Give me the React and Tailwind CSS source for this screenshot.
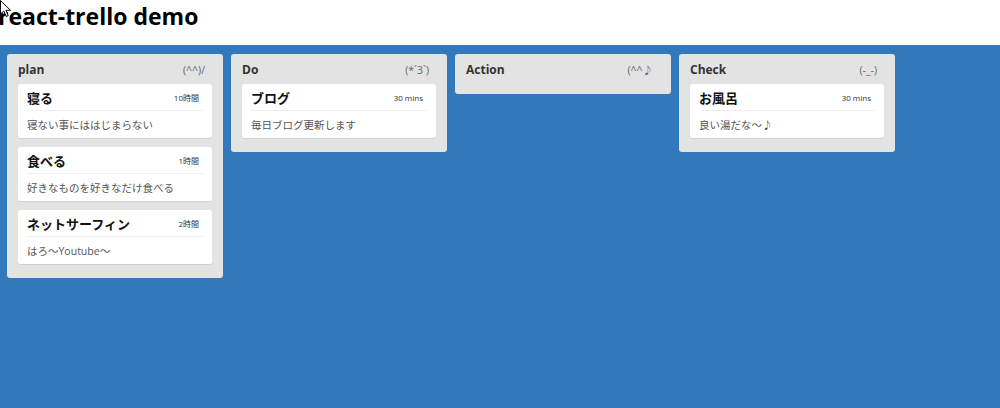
const lanes = [
  {
    title: "plan",
    label: "(^^)/",
    cards: [
      { title: "寝る", label: "10時間", description: "寝ない事にははじまらない" },
      { title: "食べる", label: "1時間", description: "好きなものを好きなだけ食べる" },
      { title: "ネットサーフィン", label: "2時間", description: "はろ～Youtube～" },
    ],
  },
  {
    title: "Do",
    label: "(*´3`)",
    cards: [{ title: "ブログ", label: "30 mins", description: "毎日ブログ更新します" }],
  },
  { title: "Action", label: "(^^♪", cards: [] },
  {
    title: "Check",
    label: "(-_-)",
    cards: [{ title: "お風呂", label: "30 mins", description: "良い湯だな～♪" }],
  },
];

function Card({ title, label, description }) {
  return (
    <article className="rounded-[3px] border-b border-[#cfcfcf] bg-white px-[9px] pt-[6px] pb-[4px]">
      <header className="flex items-center justify-between border-b border-[#eeeeee] pb-[4px]">
        <span className="text-[13px] font-bold leading-[16px] text-[#111]">{title}</span>
        <span className="pr-[4px] text-[8px] leading-[16px] text-[#333]">{label}</span>
      </header>
      <p className="pt-[5px] text-[10.5px] leading-[18px] text-[#555]">{description}</p>
    </article>
  );
}

function Lane({ title, label, cards }) {
  return (
    <section className="flex w-[216px] shrink-0 flex-col rounded-[3px] bg-[#e3e3e3] px-[11px] pb-[13px] pt-[8px]">
      <header className="flex items-center justify-between pb-[3px] pr-[7px]">
        <span className="text-[12px] font-bold leading-[16px] text-[#333]">{title}</span>
        <span className="text-[10.5px] leading-[16px] text-[#666]">{label}</span>
      </header>
      {cards.length > 0 && (
        <div className="mt-[3px] flex flex-col gap-[8px]">
          {cards.map((card) => (
            <Card key={card.title} {...card} />
          ))}
        </div>
      )}
    </section>
  );
}

export default function App() {
  return (
    <div className="relative h-[408px] w-[1000px] overflow-hidden bg-white font-['Open_Sans','Noto_Sans_CJK_JP',sans-serif]">
      <h1 className="-ml-[2px] h-[45px] pt-[1px] text-[23px] font-bold leading-[30px] text-black">react-trello demo</h1>
      <main className="flex h-[363px] items-start gap-[8px] bg-[#3179ba] px-[7px] pt-[9px]">
        {lanes.map((lane) => (
          <Lane key={lane.title} {...lane} />
        ))}
      </main>
      <svg className="absolute left-0 top-0" width="12" height="18" viewBox="0 0 12 18">
        <path d="M0.5 0.5 L0.5 14 L3.8 11 L6.2 16.5 L8.2 15.6 L5.9 10.3 L10.5 10.3 Z" fill="#fff" stroke="#000" strokeWidth="1" />
      </svg>
    </div>
  );
}
